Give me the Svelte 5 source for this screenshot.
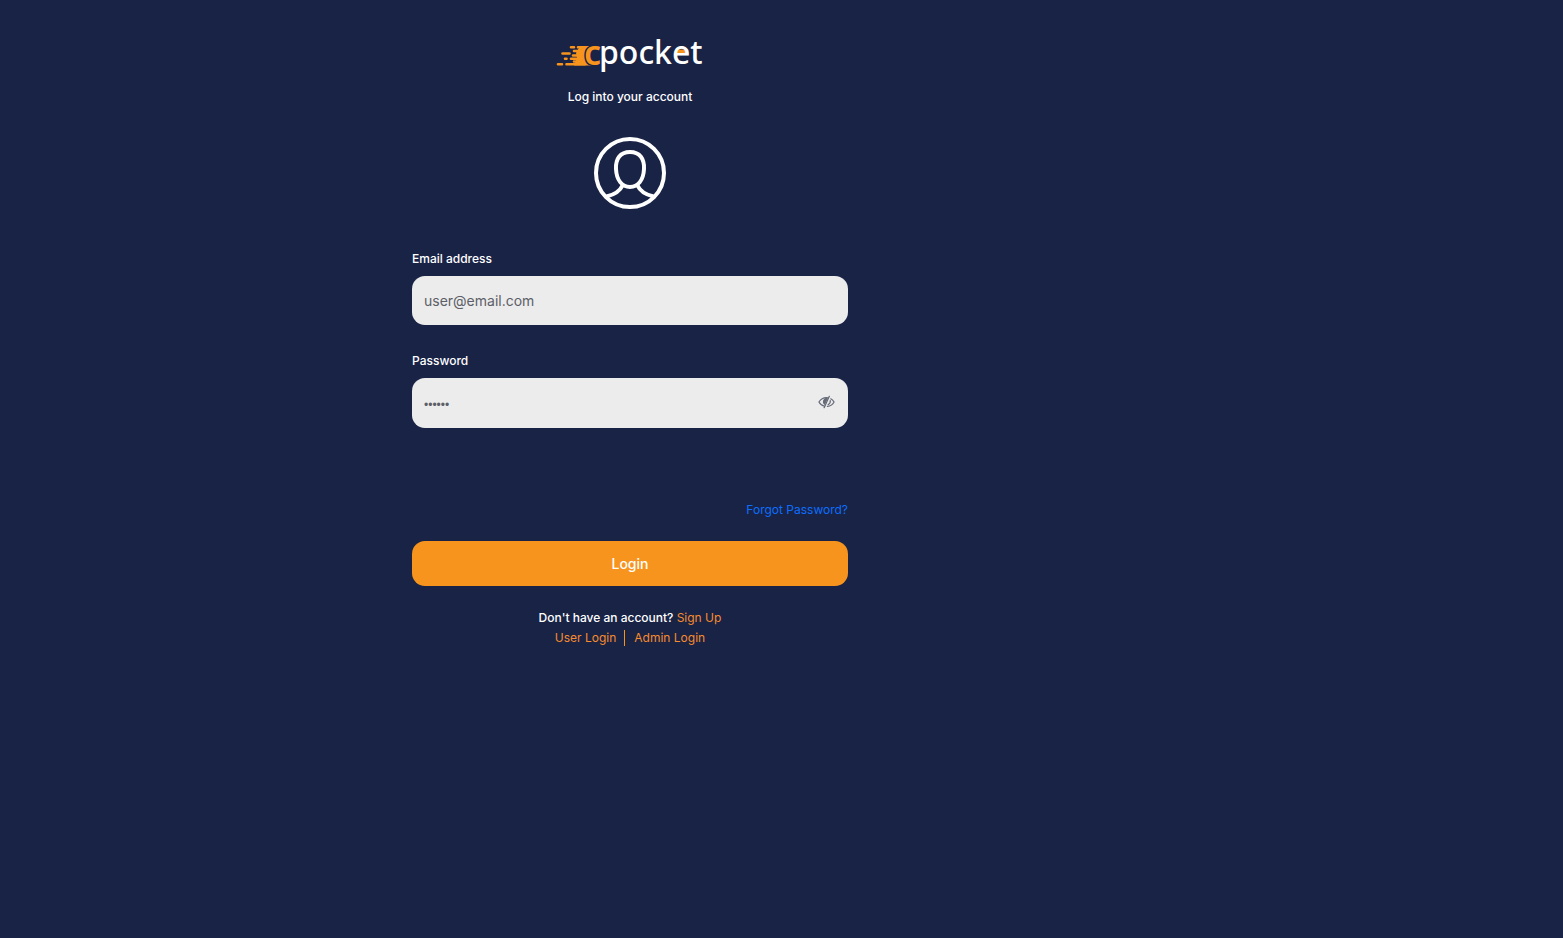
<script lang="ts">
	let email = $state('');
	let password = $state('');
	let showPassword = $state(false);

	function handleSubmit(event: SubmitEvent) {
		event.preventDefault();
	}
</script>

<main class="page">
	<div class="login">
		<header>
			<svg class="logo" viewBox="0 -8 150 48" width="150" height="48" role="img" aria-label="cpocket">
				<!-- Speed trail -->
				<path d="M25 10H40Q30 13 30 20Q30 27 41 29.500H19L22 22L21 17Z" fill="#f7941d" />
				<path
					d="M16 11.300h3M23 11.300h10M19 15h8M7.500 17.500h7M18 19.500h8M10 22.800h1.500M16 22.800h8M19 25.500h6M3 28.200h4M11.500 28.200H30"
					fill="none"
					stroke="#f7941d"
					stroke-width="2.600"
					stroke-linecap="round"
				/>
				<path d="M121 18.500v-5h10v5z" fill="#f7941d" />
				<text x="29" y="29" class="mark">c</text>
				<text x="44" y="28" class="word">pocket</text>
			</svg>
			<p class="subtitle">Log into your account</p>
			<svg class="avatar" viewBox="0 0 72 72" width="72" height="72" aria-hidden="true">
				<g fill="none" stroke="#fff" stroke-width="4">
					<circle cx="36" cy="36" r="34" />
					<path
						d="M36 15C26 15 21.500 22 22 32C22.500 43 28 50 36 50S49.500 43 50 32C50.500 22 46 15 36 15Z"
					/>
					<path d="M28.500 48.500C26 54 19 58 12.500 59.500M43.500 48.500C46 54 53 58 59.500 59.500" />
				</g>
			</svg>
		</header>

		<form onsubmit={handleSubmit}>
			<label for="email">Email address</label>
			<input id="email" type="email" placeholder="user@email.com" bind:value={email} />

			<label for="password">Password</label>
			<div class="password-field">
				<input
					id="password"
					type={showPassword ? 'text' : 'password'}
					placeholder="••••••"
					bind:value={password}
				/>
				<button
					type="button"
					class="toggle"
					aria-label="Toggle password visibility"
					onclick={() => (showPassword = !showPassword)}
				>
					<svg viewBox="0 0 18 14" width="17" height="14" aria-hidden="true">
						<g fill="none" stroke="#666b78" stroke-width="1.300" stroke-linecap="round">
							<path d="M7 11.500C4.500 11 2.300 9.300 1 7C2.800 4 5.600 2.300 9 2.300L10.500 2.500" />
							<path d="M13.500 3.600C15 4.400 16.200 5.600 17 7C15.500 9.700 13 11.400 10 11.700" />
							<path d="M13 5.500C13.200 7.500 12.300 9 10.800 9.800" />
							<path d="M12 1L6.500 13" />
						</g>
						<path d="M10.500 3.200L7.200 10.300C5 9 4.600 6 6 4.300C7 3 9 2.500 10.500 3.200Z" fill="#666b78" />
					</svg>
				</button>
			</div>

			<a class="forgot" href="#forgot">Forgot Password?</a>
			<button type="submit" class="submit">Login</button>
		</form>

		<footer>
			<p>Don't have an account? <a href="#signup">Sign Up</a></p>
			<nav>
				<a href="#user">User Login</a>
				<a href="#admin">Admin Login</a>
			</nav>
		</footer>
	</div>
</main>

<style>
	:global(body) {
		margin: 0;
		background: #192346;
	}

	.page {
		max-width: 1260px;
		padding: 28px 16px;
		box-sizing: border-box;
		font-family: Inter, 'Liberation Sans', sans-serif;
		font-size: 12px;
		font-weight: 500;
		line-height: 20px;
		color: #fff;
	}

	.login {
		max-width: 436px;
		margin: 0 auto;
	}

	header {
		display: flex;
		flex-direction: column;
		align-items: center;
	}

	.mark,
	.word {
		font-family: 'Noto Sans', 'Open Sans', sans-serif;
		font-size: 32px;
		font-weight: 500;
	}

	.mark {
		fill: #f7941d;
		stroke: #192346;
		stroke-width: 3px;
		paint-order: stroke;
		font-size: 34px;
		font-weight: 600;
	}

	.word {
		fill: #fff;
	}

	.subtitle {
		margin: 11px 0 30px;
	}

	form {
		display: flex;
		flex-direction: column;
		margin-top: 40px;
	}

	label {
		margin-bottom: 7px;
	}

	input {
		width: 100%;
		height: 49px;
		padding: 0 12px;
		box-sizing: border-box;
		border: 0;
		border-radius: 13px;
		background: #ececec;
		color: #333;
		font-family: inherit;
		font-size: 14px;
	}

	input::placeholder {
		color: #5c5f68;
		opacity: 1;
	}

	#email {
		margin-bottom: 26px;
	}

	.password-field {
		position: relative;
	}

	#password {
		display: block;
		height: 50px;
	}

	#password::placeholder {
		font-family: 'Liberation Sans', sans-serif;
		font-size: 12px;
	}

	.toggle {
		position: absolute;
		top: 0;
		right: 13px;
		bottom: 2px;
		display: flex;
		align-items: center;
		padding: 0;
		border: 0;
		background: none;
		cursor: pointer;
	}

	a {
		color: #f78b2d;
		font-weight: 400;
		text-decoration: none;
	}

	.forgot {
		align-self: flex-end;
		margin: 72px 0 21px;
		color: #0d6efd;
	}

	.submit {
		height: 45px;
		border: 0;
		border-radius: 13px;
		background: #f7941d;
		color: #fff;
		font-family: inherit;
		font-size: 14px;
		font-weight: 500;
		cursor: pointer;
	}

	footer {
		margin-top: 22px;
		text-align: center;
	}

	footer p {
		margin: 0;
	}

	nav {
		display: flex;
		justify-content: center;
		padding-top: 2px;
	}

	nav a {
		line-height: 16px;
	}

	nav a + a {
		margin-left: 8px;
		padding-left: 9px;
		border-left: 1px solid #f7941d;
	}
</style>
